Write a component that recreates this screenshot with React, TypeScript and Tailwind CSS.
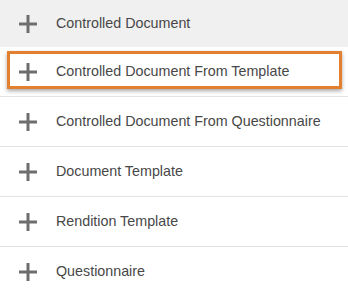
import React from 'react';

const items = [
  'Controlled Document',
  'Controlled Document From Template',
  'Controlled Document From Questionnaire',
  'Document Template',
  'Rendition Template',
  'Questionnaire',
];

function PlusIcon() {
  return (
    <svg width="18" height="18" viewBox="0 0 18 18" className="shrink-0">
      <rect x="0" y="7.5" width="18" height="3" fill="#6e6e6e" />
      <rect x="7.5" y="0" width="3" height="18" fill="#6e6e6e" />
    </svg>
  );
}

export default function App() {
  return (
    <div
      className="w-[348px] h-[293px] overflow-hidden bg-white text-[14.3px] text-[#474747]"
      style={{ fontFamily: '"Liberation Sans", Arial, sans-serif' }}
    >
      {items.map((label, i) => (
        <div
          key={label}
          className={
            i === 0
              ? 'flex items-center h-[47px] bg-[#f0f0f0] pl-[19px]'
              : 'relative flex items-center h-[50px] border-b border-[#e3e3e3] pl-[19px]'
          }
        >
          <PlusIcon />
          <span className="ml-[19px]">{label}</span>
          {i === 1 && (
            <div className="absolute left-[7px] right-[6px] top-[4px] h-[38px] border-[3px] border-[#e2802f] shadow-[0_2px_4px_rgba(0,0,0,0.35)]" />
          )}
        </div>
      ))}
    </div>
  );
}
